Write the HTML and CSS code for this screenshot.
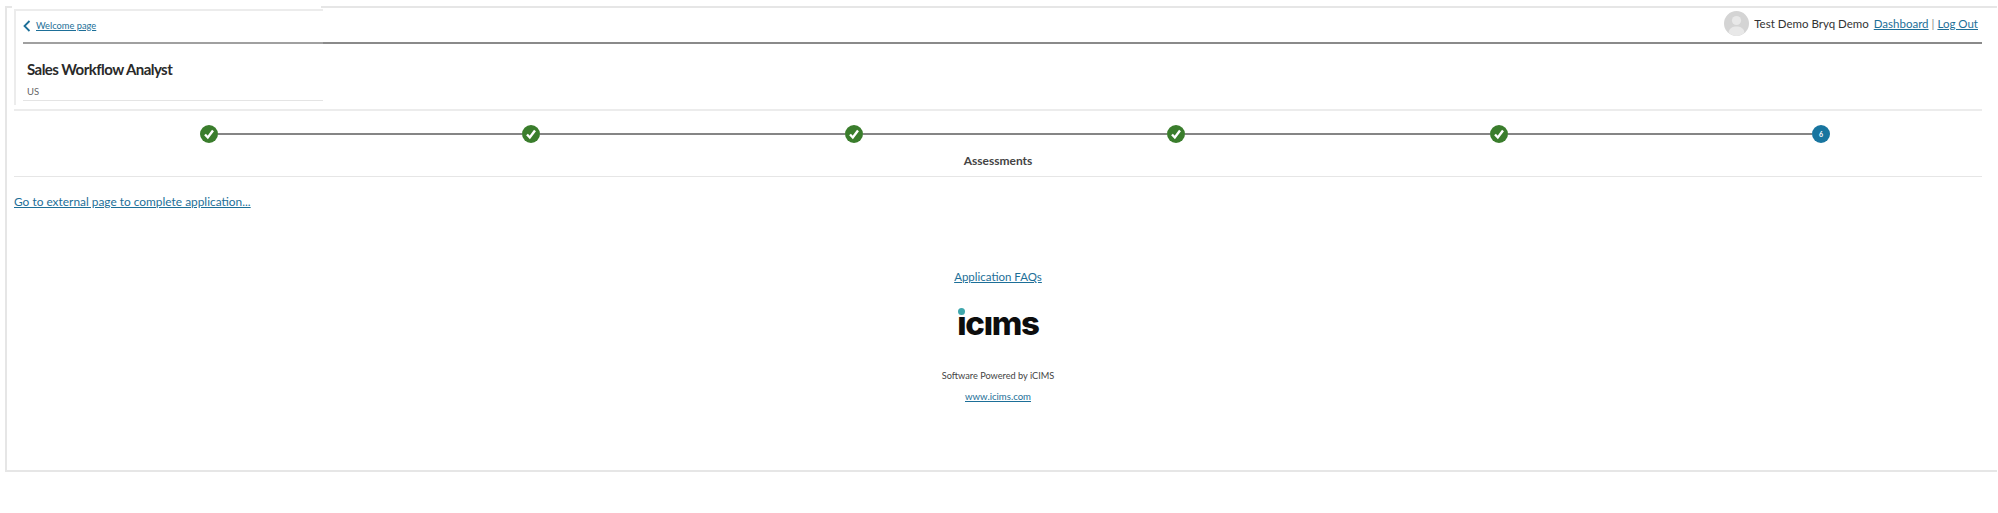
FILE: index.html
```html
<!DOCTYPE html>
<html lang="en">
<head>
<meta charset="utf-8">
<title>Sales Workflow Analyst</title>
<link rel="stylesheet" href="styles.css">
</head>
<body>
<main class="frame">
  <div class="content">
    <header class="header">
      <section class="card">
        <div class="back-row">
          <svg class="chevron" width="8" height="12" viewBox="0 0 8 12"><path d="M6.5 1 L1.5 6 L6.5 11" fill="none" stroke="#1d6f98" stroke-width="1.8"/></svg>
          <a href="#" class="link back-link">Welcome page</a>
        </div>
        <div class="card-body">
          <h1 class="title">Sales Workflow Analyst</h1>
          <div class="location">US</div>
        </div>
      </section>
      <nav class="topbar">
        <svg class="avatar" width="25" height="25" viewBox="0 0 25 25"><circle cx="12.5" cy="12.5" r="12.5" fill="#d4d4d4"/><circle cx="12.5" cy="9.5" r="4.6" fill="#e8e8e8"/><path d="M4.5 21.5 C5.5 16.5 9 15.5 12.5 15.5 C16 15.5 19.5 16.5 20.5 21.5 C16 26 9 26 4.5 21.5Z" fill="#e8e8e8"/></svg>
        <span class="user">Test Demo Bryq Demo</span>
        <a href="#" class="link">Dashboard</a>
        <span class="pipe">|</span>
        <a href="#" class="link">Log Out</a>
      </nav>
    </header>

    <section class="progress">
      <div class="steps">
        <span class="step done"><svg width="12" height="12" viewBox="0 0 12 12"><path d="M2 6.5 L4.8 9.5 L10 2.5" fill="none" stroke="#fff" stroke-width="2.4"/></svg></span>
        <span class="line"></span>
        <span class="step done"><svg width="12" height="12" viewBox="0 0 12 12"><path d="M2 6.5 L4.8 9.5 L10 2.5" fill="none" stroke="#fff" stroke-width="2.4"/></svg></span>
        <span class="line"></span>
        <span class="step done"><svg width="12" height="12" viewBox="0 0 12 12"><path d="M2 6.5 L4.8 9.5 L10 2.5" fill="none" stroke="#fff" stroke-width="2.4"/></svg></span>
        <span class="line"></span>
        <span class="step done"><svg width="12" height="12" viewBox="0 0 12 12"><path d="M2 6.5 L4.8 9.5 L10 2.5" fill="none" stroke="#fff" stroke-width="2.4"/></svg></span>
        <span class="line"></span>
        <span class="step done"><svg width="12" height="12" viewBox="0 0 12 12"><path d="M2 6.5 L4.8 9.5 L10 2.5" fill="none" stroke="#fff" stroke-width="2.4"/></svg></span>
        <span class="line"></span>
        <span class="step current">6</span>
      </div>
      <div class="step-label">Assessments</div>
    </section>

    <div class="external"><a href="#" class="link">Go to external page to complete application...</a></div>

    <footer class="footer">
      <a href="#" class="link faq">Application FAQs</a>
      <div class="logo"><span class="logo-dot"></span>ıcıms</div>
      <div class="powered">Software Powered by iCIMS</div>
      <a href="#" class="link small">www.icims.com</a>
    </footer>
  </div>
</main>
</body>
</html>
```

FILE: styles.css
```css
* { box-sizing: border-box; }
html, body { margin: 0; padding: 0; background: #fff; }
body {
  font-family: "Lato", "Noto Sans", sans-serif;
  font-size: 11.9px;
  color: #333;
  height: 513px;
  overflow: hidden;
}
.link { color: #1d6f98; text-decoration: underline; }

.frame {
  width: 1992px;
  height: 466px;
  margin: 6px 0 0 5px;
  border: solid #e6e6e6;
  border-width: 2px 0 2px 2px;
}
.content { width: 1968px; margin-left: 7px; }

.header {
  display: flex;
  height: 103px;
  border-bottom: 2px solid #ececec;
  align-items: flex-start;
}
.card {
  flex: 0 0 309px;
  height: 96px;
  margin-top: 1px;
  padding-left: 7px;
  background: #fff;
  border-top: 2px solid #ececec;
  border-left: 2px solid #ececec;
  box-shadow: -2px -3px 0 #fff;
}
.back-row {
  display: flex;
  align-items: center;
  gap: 5px;
  height: 33px;
  padding-bottom: 3px;
  border-bottom: 2px solid #a0a0a0;
}
.chevron { flex: none; margin-top: 1px; }
.back-link { font-size: 9.3px; }
.card-body {
  height: 57px;
  padding: 15px 0 0 4px;
  border-bottom: 1px solid #e4e4e4;
}
.title {
  margin: 0;
  font-size: 15px;
  line-height: 20px;
  font-weight: 700;
  letter-spacing: -0.55px;
  color: #2a2a2a;
}
.location { margin-top: 7px; font-size: 9.5px; line-height: 12px; color: #666; }

.topbar {
  flex: 1;
  display: flex;
  justify-content: flex-end;
  align-items: center;
  gap: 3px;
  height: 36px;
  padding: 0 4px 4px 0;
  border-bottom: 2px solid #8a8a8a;
  font-size: 11.5px;
}
.avatar { flex: none; margin-right: 2px; }
.user { margin-right: 2px; }
.pipe { color: #888; }

.progress {
  height: 66px;
  padding-top: 14px;
  border-bottom: 1px solid #e6e6e6;
}
.steps {
  display: flex;
  align-items: center;
  padding: 0 152px 0 186px;
}
.step {
  flex: none;
  display: flex;
  align-items: center;
  justify-content: center;
  width: 18px;
  height: 18px;
  border-radius: 50%;
  color: #fff;
  font-size: 7px;
  font-weight: 700;
}
.done { background: #3a7d2c; }
.current { background: #18759f; }
.line { flex: 1; height: 2px; background: #858585; }
.step-label {
  margin-top: 10px;
  text-align: center;
  font-size: 12px;
  line-height: 16px;
  font-weight: 700;
  color: #444;
}

.external { padding-top: 17px; line-height: 16px; }

.footer {
  display: flex;
  flex-direction: column;
  align-items: center;
  padding-top: 59px;
  line-height: 16px;
}
.faq { font-size: 11.5px; }
.logo {
  position: relative;
  margin-top: 17px;
  font-family: "Inter", sans-serif;
  font-size: 33px;
  line-height: 42px;
  font-weight: 800;
  letter-spacing: -1.3px;
  color: #0d0d0d;
}
.logo-dot {
  position: absolute;
  left: 1px;
  top: 6px;
  width: 7px;
  height: 7px;
  border-radius: 50%;
  background: #3fa7ad;
}
.powered { margin-top: 25px; font-size: 9.2px; line-height: 14px; color: #444; }
.small { margin-top: 7px; font-size: 9.6px; line-height: 14px; }
```
